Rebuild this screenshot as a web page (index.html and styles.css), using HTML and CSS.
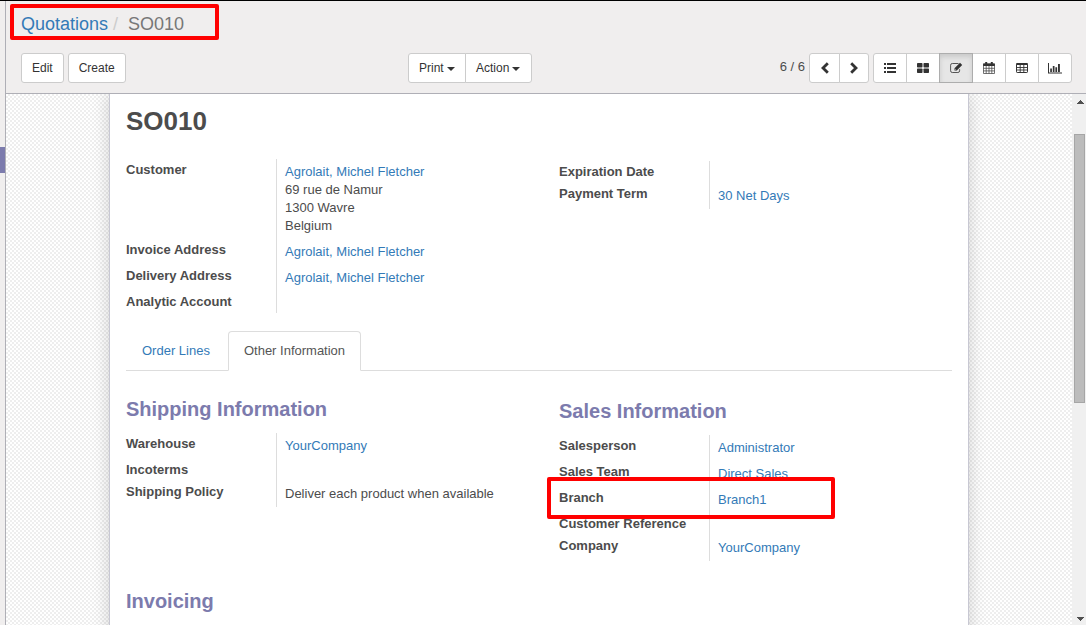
FILE: index.html
```html
<!DOCTYPE html>
<html lang="en">
<head>
<meta charset="utf-8">
<title>SO010 - Quotations</title>
<link rel="stylesheet" href="styles.css">
</head>
<body>
<div class="app">
  <aside class="rail"><div class="rail-active"></div></aside>
  <main class="main">
    <header class="control-panel">
      <div class="breadcrumb"><a href="#">Quotations</a><span class="sep">/</span><span class="current">SO010</span></div>
      <div class="toolbar">
        <div class="left-buttons"><button class="btn">Edit</button><button class="btn create">Create</button></div>
        <div class="group menus"><button class="btn">Print<i class="caret"></i></button><button class="btn action">Action<i class="caret"></i></button></div>
        <div class="right-tools">
          <span class="pager">6 / 6</span>
          <div class="group arrows">
            <button class="btn" aria-label="Previous"><svg width="10" height="12" viewBox="0 0 10 12"><path d="M7.8 1.2 3 6l4.8 4.8" fill="none" stroke="#333" stroke-width="2.8"/></svg></button>
            <button class="btn" aria-label="Next"><svg width="10" height="12" viewBox="0 0 10 12"><path d="M2.2 1.2 7 6l-4.8 4.8" fill="none" stroke="#333" stroke-width="2.8"/></svg></button>
          </div>
          <div class="group views">
            <button class="btn" aria-label="List"><svg width="12" height="12" viewBox="0 0 12 12" fill="#333"><path d="M0 1h2v2H0zM0 5h2v2H0zM0 9h2v2H0zM3 1h9v2H3zM3 5h9v2H3zM3 9h9v2H3z"/></svg></button>
            <button class="btn" aria-label="Kanban"><svg width="12" height="12" viewBox="0 0 12 12" fill="#333"><rect y="1" width="5.5" height="4.5" rx=".7"/><rect x="6.5" y="1" width="5.5" height="4.5" rx=".7"/><rect y="6.5" width="5.5" height="4.5" rx=".7"/><rect x="6.5" y="6.5" width="5.5" height="4.5" rx=".7"/></svg></button>
            <button class="btn active" aria-label="Form"><svg width="13" height="12" viewBox="0 0 13 12"><path d="M8.5 1.5H2.3Q.6 1.5.6 3.2v5.6q0 1.7 1.7 1.7h5.6q1.7 0 1.7-1.7V7.2" fill="none" stroke="#444" stroke-width=".9"/><path d="M4.5 6.2 10 .8l2.2 2.2-5.4 5.5H4.5zM5.2 6.7v1.1h1.1z" fill="#333" fill-rule="evenodd"/></svg></button>
            <button class="btn" aria-label="Calendar"><svg width="12" height="12" viewBox="0 0 12 12"><path d="M.5 2h11v9.5H.5zM.5 6.3h11M.5 8.9h11M3.2 4v7.5M6 4v7.5M8.8 4v7.5" fill="none" stroke="#444" stroke-width=".75"/><path d="M.2 1.6h11.6V4H.2zM2.2 0h2v3h-2zM7.8 0h2v3h-2z" fill="#333"/></svg></button>
            <button class="btn" aria-label="Pivot"><svg width="12" height="12" viewBox="0 0 12 12"><rect x=".5" y="1.5" width="11" height="9" rx=".7" fill="none" stroke="#333"/><path d="M.5 1h11v2H.5z" fill="#333"/><path d="M.5 5.5h11M.5 8h11M4.2 3v7.5M7.8 3v7.5" stroke="#333" stroke-width=".9"/></svg></button>
            <button class="btn" aria-label="Graph"><svg width="14" height="12" viewBox="0 0 14 12" fill="#333"><path d="M0 1h1v9.5h13v1H0zM2.2 6.5h1.7V10H2.2zM4.8 4h1.7v6H4.8zM7.4 5.3h1.7V10H7.4zM10 2h1.9v8H10z"/></svg></button>
          </div>
        </div>
      </div>
      <div class="highlight highlight-title"></div>
    </header>
    <div class="content">
      <div class="canvas">
        <article class="sheet">
          <h1>SO010</h1>
          <section class="columns top-fields">
            <dl class="fields">
              <dt>Customer</dt><dd><a href="#">Agrolait, Michel Fletcher</a><br>69 rue de Namur<br>1300 Wavre<br>Belgium</dd>
              <dt>Invoice Address</dt><dd><a href="#">Agrolait, Michel Fletcher</a></dd>
              <dt>Delivery Address</dt><dd><a href="#">Agrolait, Michel Fletcher</a></dd>
              <dt>Analytic Account</dt><dd class="empty"></dd>
            </dl>
            <dl class="fields lower">
              <dt>Expiration Date</dt><dd class="empty"></dd>
              <dt>Payment Term</dt><dd><a href="#">30 Net Days</a></dd>
            </dl>
          </section>
          <nav class="tabs"><a href="#">Order Lines</a><a href="#" class="selected">Other Information</a></nav>
          <section class="columns info">
            <div>
              <h2>Shipping Information</h2>
              <dl class="fields">
                <dt>Warehouse</dt><dd><a href="#">YourCompany</a></dd>
                <dt>Incoterms</dt><dd class="empty"></dd>
                <dt>Shipping Policy</dt><dd>Deliver each product when available</dd>
              </dl>
            </div>
            <div class="lower">
              <h2>Sales Information</h2>
              <dl class="fields">
                <dt>Salesperson</dt><dd><a href="#">Administrator</a></dd>
                <dt>Sales Team</dt><dd><a href="#">Direct Sales</a></dd>
                <dt>Branch</dt><dd><a href="#">Branch1</a></dd>
                <dt>Customer Reference</dt><dd class="empty"></dd>
                <dt>Company</dt><dd><a href="#">YourCompany</a></dd>
              </dl>
              <div class="highlight highlight-branch"></div>
            </div>
          </section>
          <h2 class="invoicing">Invoicing</h2>
        </article>
      </div>
      <div class="scrollbar">
        <svg width="7" height="4" viewBox="0 0 7 4" shape-rendering="crispEdges"><path d="M3 0h1v1h1v1h1v1h1v1H0V3h1V2h1V1h1z" fill="#505050"/></svg>
        <div class="thumb"></div>
        <svg class="down" width="7" height="4" viewBox="0 0 7 4" shape-rendering="crispEdges"><path d="M0 0h7v1H6v1H5v1H4v1H3V3H2V2H1V1H0z" fill="#505050"/></svg>
      </div>
    </div>
  </main>
</div>
</body>
</html>
```
FILE: styles.css
```css
* { box-sizing: border-box; }
body { margin: 0; font: 13px/18px "Liberation Sans", Arial, sans-serif; color: #4c4c4c; overflow: hidden; }
a { color: #337ab7; text-decoration: none; }
h1, h2, dl, dd { margin: 0; }
.app { display: flex; height: 625px; border-top: 1px solid #000; background: #f0eeee; }
.rail { width: 6px; border-right: 1px solid #afafb6; padding-top: 146px; }
.rail-active { height: 26px; background: #7c7bad; }
.main { flex: 1; display: flex; flex-direction: column; min-width: 0; }
.control-panel { position: relative; height: 93px; border-bottom: 1px solid #afafb6; padding: 11px 14px 0 15px; }
.breadcrumb { height: 24px; font-size: 18px; line-height: 24px; }
.breadcrumb .sep { color: #ccc; padding: 0 10px 0 5px; }
.breadcrumb .current { color: #777; }
.toolbar { display: grid; grid-template-columns: 387px 1fr auto; margin-top: 17px; }
.left-buttons { display: flex; gap: 4px; }
.btn { display: flex; align-items: center; justify-content: center; height: 30px; padding: 0 10px; border: 1px solid #ccc; border-radius: 3px; background: #fff; color: #333; font: 12px/18px "Liberation Sans", Arial, sans-serif; }
.create { width: 58px; }
.action { width: 67px; }
.group { display: flex; }
.group .btn + .btn { margin-left: -1px; }
.group .btn:not(:first-child) { border-top-left-radius: 0; border-bottom-left-radius: 0; }
.group .btn:not(:last-child) { border-top-right-radius: 0; border-bottom-right-radius: 0; }
.caret { margin: 2px 0 0 3px; border: 4px solid transparent; border-top-color: #333; border-bottom: 0; }
.right-tools { display: flex; }
.pager { line-height: 27px; margin-right: 4px; }
.arrows { margin-right: 4px; }
.arrows .btn { width: 31px; padding: 0; }
.arrows .btn:last-child { width: 30px; }
.views .btn { width: 34px; padding: 0; }
.views .active { position: relative; background: #e6e6e6; border-color: #adadad; box-shadow: inset 0 3px 5px rgba(0,0,0,.125); }
.content { flex: 1; display: flex; min-height: 0; }
.canvas { flex: 1; overflow: hidden; padding-left: 103px; background: repeating-conic-gradient(#eee 0 25%, #fff 0 50%) 0 0 / 4px 4px; }
.sheet { width: 860px; height: 560px; padding: 0 16px; background: #fff; border: 1px solid #c8c8d3; border-top: 0; box-shadow: 0 5px 20px -15px #000; box-shadow: 0 0 16px rgba(0,0,0,.18); }
h1 { padding-top: 12px; font-size: 26px; line-height: 30px; }
h2 { color: #7c7bad; font-size: 20px; line-height: 24px; }
.columns { display: grid; grid-template-columns: 433px 1fr; align-items: start; }
.top-fields { margin-top: 23px; }
.lower { margin-top: 2px; }
.fields { display: grid; grid-template-columns: 150px 1fr; }
dt { font-weight: bold; padding: 2px 0; }
dd { padding: 4px 8px; border-left: 1px solid #ddd; }
dd.empty { height: 22px; }
.tabs { display: flex; margin-top: 18px; height: 40px; border-bottom: 1px solid #ddd; }
.tabs a { height: 40px; padding: 10px 15px; border: 1px solid transparent; border-radius: 4px 4px 0 0; margin-right: 2px; }
.tabs .selected { color: #555; background: #fff; border-color: #ddd; border-bottom-color: #fff; margin-right: 0; }
.info { margin-top: 26px; height: 176px; }
.info .fields { margin-top: 12px; }
.info > div { position: relative; }
.invoicing { margin-top: 16px; }
.highlight { position: absolute; border: 4px solid #f00; border-radius: 2px; }
.highlight-title { left: 4px; top: 3px; width: 209px; height: 36px; }
.highlight-branch { left: -12px; top: 78px; width: 288px; height: 42px; }
.scrollbar { width: 14px; background: #f0f0f0; display: flex; flex-direction: column; align-items: center; padding: 6px 0 4px 2px; }
.scrollbar svg { display: block; flex: none; }
.thumb { align-self: stretch; margin: 30px 1px 0 0; height: 269px; background: #bcbcbc; border: 1px solid #a6a6a6; }
.down { margin-top: auto; }
```
